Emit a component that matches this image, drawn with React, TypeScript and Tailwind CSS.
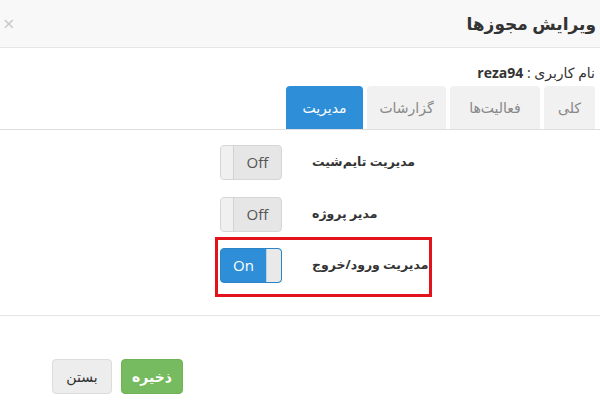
const tabs = [
  { label: "کلی", w: "w-[51px]" },
  { label: "فعالیت‌ها", w: "w-[90px]" },
  { label: "گزارشات", w: "w-[79px]" },
  { label: "مدیریت", w: "w-[77px]", active: true },
];

const Toggle = ({ on }: { on?: boolean }) =>
  on ? (
    <div className="flex h-[35px] w-[62px] shrink-0 overflow-hidden rounded-[4px] border border-[#2a84c7] bg-[#2e8fd8]">
      <span className="flex flex-1 items-center justify-center text-[15px] text-white">On</span>
      <span className="w-[15px] rounded-r-[3px] border-l border-[#bcd3e6] bg-[#e9e9e9]" />
    </div>
  ) : (
    <div className="flex h-[35px] w-[62px] shrink-0 overflow-hidden rounded-[4px] border border-[#d6d6d6] bg-[#e6e6e6]">
      <span className="w-[13px] border-r border-[#d2d2d2] bg-[#f0f0f0]" />
      <span className="flex flex-1 items-center justify-center text-[15px] text-[#555]">Off</span>
    </div>
  );

const Row = ({ label, on }: { label: string; on?: boolean }) => (
  <div className="flex items-center gap-[30px]">
    <Toggle on={on} />
    <span dir="rtl" className="whitespace-nowrap text-[12.5px] font-bold text-[#333]">
      {label}
    </span>
  </div>
);

export default function App() {
  return (
    <div
      className="h-[407px] w-[600px] overflow-hidden bg-white text-[#333]"
      style={{ fontFamily: '"Open Sans", "DejaVu Sans", sans-serif' }}
    >
      <div className="flex h-[48px] items-center justify-between border-b border-[#e5e5e5] bg-[#f8f8f8] pl-[3px] pr-[4px]">
        <span className="text-[20px] leading-none text-[#c8c8c8]">×</span>
        <h1 dir="rtl" className="text-[17px] font-bold text-[#333]">
          ویرایش مجوزها
        </h1>
      </div>

      <div dir="rtl" className="pr-[5px] pt-[14px] text-[14px] leading-[22px]">
        نام کاربری : <span className="font-bold">reza94</span>
      </div>

      <div dir="rtl" className="mt-[2px] flex h-[44px] items-end gap-[4px] border-b border-[#dedede] pr-[5px]">
        {tabs.map((t) => (
          <div
            key={t.label}
            className={`flex h-[43px] items-center justify-center rounded-t-[4px] text-[14px] ${t.w} ${
              t.active ? "bg-[#2e8fd8] text-white" : "bg-[#f1f1f1] text-[#888]"
            }`}
          >
            {t.label}
          </div>
        ))}
      </div>

      <div className="flex flex-col pl-[220px] pt-[15px]">
        <Row label="مدیریت تایم‌شیت" />
        <div className="mt-[17px]">
          <Row label="مدیر پروژه" />
        </div>
        <div className="-ml-[5px] mt-[5px] h-[60px] w-[217px] border-[3px] border-[#e3131b] pl-[2px] pt-[8px]">
          <Row label="مدیریت ورود/خروج" on />
        </div>
      </div>

      <div className="mt-[18px] border-t border-[#e6e6e6]" />

      <div className="flex gap-[9px] pl-[52px] pt-[43px]">
        <button className="h-[35px] w-[60px] rounded-[4px] border border-[#dcdcdc] bg-[#ededed] text-[14px] text-[#333]">
          بستن
        </button>
        <button className="h-[35px] w-[62px] rounded-[4px] border border-[#6fb257] bg-[#76bb5f] text-[14px] font-bold text-white">
          ذخیره
        </button>
      </div>
    </div>
  );
}
